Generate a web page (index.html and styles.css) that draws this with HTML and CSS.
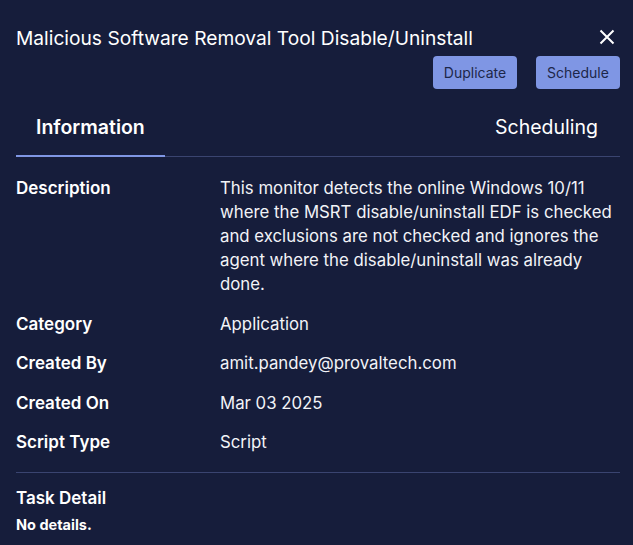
FILE: index.html
```html
<!DOCTYPE html>
<html>
<head>
<meta charset="utf-8">
<link rel="stylesheet" href="styles.css">
</head>
<body>
<div class="panel">
  <div class="header">
    <h1 class="title">Malicious Software Removal Tool Disable/Uninstall</h1>
    <button class="close" aria-label="Close">
      <svg width="16" height="16" viewBox="0 0 16 16"><path d="M1.5 1.5 L14.5 14.5 M14.5 1.5 L1.5 14.5" stroke="#ffffff" stroke-width="2"/></svg>
    </button>
  </div>
  <div class="actions">
    <button class="btn">Duplicate</button>
    <button class="btn">Schedule</button>
  </div>
  <div class="tabs">
    <div class="tab active">Information</div>
    <div class="tab last">Scheduling</div>
  </div>
  <div class="details">
    <div class="row">
      <div class="label">Description</div>
      <div class="value">This monitor detects the online Windows 10/11 where the MSRT disable/uninstall EDF is checked and exclusions are not checked and ignores the agent where the disable/uninstall was already done.</div>
    </div>
    <div class="row">
      <div class="label">Category</div>
      <div class="value">Application</div>
    </div>
    <div class="row">
      <div class="label">Created By</div>
      <div class="value">amit.pandey@provaltech.com</div>
    </div>
    <div class="row">
      <div class="label">Created On</div>
      <div class="value">Mar 03 2025</div>
    </div>
    <div class="row">
      <div class="label">Script Type</div>
      <div class="value">Script</div>
    </div>
  </div>
  <div class="task">
    <div class="task-title">Task Detail</div>
    <div class="task-empty">No details.</div>
  </div>
</div>
</body>
</html>
```
FILE: styles.css
```css
html, body {
  margin: 0;
  padding: 0;
  background: #161d3b;
}
body {
  font-family: Inter, "Noto Sans", sans-serif;
  color: #ffffff;
  width: 633px;
  height: 545px;
  overflow: hidden;
}
.panel {
  padding: 26px 13px 0 16px;
}
.header {
  display: flex;
  align-items: center;
  justify-content: space-between;
  height: 24px;
}
.title {
  margin: 0;
  font-size: 19.2px;
  font-weight: 400;
  line-height: 24px;
  color: #ffffff;
}
.close {
  background: none;
  border: none;
  padding: 0;
  margin-right: 5px;
  margin-top: -2px;
  width: 16px;
  height: 16px;
  display: flex;
}
.actions {
  display: flex;
  justify-content: flex-end;
  gap: 19px;
  margin-top: 6px;
}
.btn {
  font-family: Inter, "Noto Sans", sans-serif;
  font-size: 14px;
  color: #1d2749;
  background: #7f96e4;
  border: none;
  border-radius: 4px;
  height: 33px;
  width: 84px;
  padding: 0;
}
.tabs {
  display: flex;
  justify-content: space-between;
  margin-top: 12px;
  border-bottom: 1px solid #3a4470;
}
.tab {
  font-size: 19.5px;
  line-height: 24px;
  padding: 14px 20px 16px 20px;
  margin-bottom: -1px;
  border-bottom: 2px solid transparent;
  color: #ffffff;
}
.tab.last {
  padding-right: 22px;
}
.tab.active {
  font-weight: 600;
  border-bottom-color: #7f96e4;
}
.details {
  display: flex;
  flex-direction: column;
  gap: 15.5px;
  padding: 19px 0 18px;
  border-bottom: 1px solid #3a4470;
}
.row {
  display: flex;
  font-size: 17px;
  line-height: 24px;
}
.label {
  width: 204px;
  flex: none;
  font-weight: 600;
}
.value {
  flex: 1;
  font-size: 16.8px;
  color: #f2f3f7;
  padding-right: 1px;
}
.task {
  padding-top: 13px;
}
.task-title {
  font-size: 17px;
  font-weight: 600;
  line-height: 24px;
}
.task-empty {
  font-size: 14.5px;
  font-weight: 700;
  line-height: 20px;
  margin-top: 5px;
}
```
